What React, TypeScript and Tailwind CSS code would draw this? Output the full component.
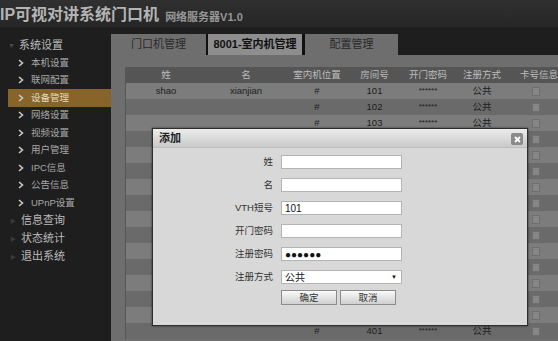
import React from "react";

const font = { fontFamily: '"Liberation Sans", "Noto Sans CJK SC", sans-serif' };

const subItems = ["本机设置", "联网配置", "设备管理", "网络设置", "视频设置", "用户管理", "IPC信息", "公告信息", "UPnP设置"];
const topItems = ["信息查询", "状态统计", "退出系统"];

type Row = { first: string; last: string; pos: string; room: string; pwd: string; mode: string };

const blank: Row = { first: "", last: "", pos: "", room: "", pwd: "", mode: "" };

// rows 4-15 sit behind the dialog
const rows: Row[] = [
  { first: "shao", last: "xianjian", pos: "#", room: "101", pwd: "******", mode: "公共" },
  { first: "", last: "", pos: "#", room: "102", pwd: "******", mode: "公共" },
  { first: "", last: "", pos: "#", room: "103", pwd: "******", mode: "公共" },
  ...Array.from({ length: 12 }, () => blank),
  { first: "", last: "", pos: "#", room: "401", pwd: "******", mode: "公共" },
];

const cols = "grid grid-cols-[80px_80px_62px_53px_54px_54px_60px]";

function Chevron() {
  return (
    <svg width="6" height="8" viewBox="0 0 6 8" className="shrink-0">
      <polyline points="1,1 4.5,4 1,7" fill="none" stroke="#c8c8c8" strokeWidth="1.6" />
    </svg>
  );
}

function Sidebar() {
  return (
    <div className="w-[111px] shrink-0 bg-[#1e1e1e] pt-[9px]">
      <div className="flex h-[18px] items-center pl-[8px]">
        <span className="mr-[4px] text-[7px] leading-none text-[#4a4a4a]">▼</span>
        <span className="text-[11px] text-[#bababa]">系统设置</span>
      </div>
      {subItems.map((s) => (
        <div
          key={s}
          className={
            "ml-[8px] flex h-[17.5px] items-center pl-[10px] " + (s === "设备管理" ? "bg-[#87652a]" : "")
          }
        >
          <Chevron />
          <span className={"ml-[7px] text-[9.5px] " + (s === "设备管理" ? "text-[#e4d8bc]" : "text-[#a8a8a8]")}>{s}</span>
        </div>
      ))}
      {topItems.map((s) => (
        <div key={s} className="flex h-[18px] items-center pl-[10px]">
          <span className="mr-[5px] text-[6px] leading-none text-[#3a3a3a]">▶</span>
          <span className="text-[11px] text-[#bababa]">{s}</span>
        </div>
      ))}
    </div>
  );
}

function Tabs() {
  return (
    <div className="flex h-[22px] bg-[#1e1e1e] pt-[1px]">
      <div className="flex w-[95px] items-center justify-center bg-[#6e6e6e] text-[11px] text-[#2a2a2a]">门口机管理</div>
      <div className="w-[2px] bg-[#111]" />
      <div className="flex w-[94px] items-center justify-center bg-[#8e8e8e] text-[11px] font-bold text-[#111]">8001-室内机管理</div>
      <div className="w-[3px] bg-[#111]" />
      <div className="flex w-[93px] items-center justify-center bg-[#6e6e6e] text-[11px] text-[#2a2a2a]">配置管理</div>
    </div>
  );
}

function Table() {
  return (
    <div className="border-l border-[#565656]">
      <div className={cols + " h-[16px] items-center bg-[#555] text-center text-[9.5px] text-[#bdbdbd]"}>
        <span>姓</span>
        <span>名</span>
        <span>室内机位置</span>
        <span>房间号</span>
        <span>开门密码</span>
        <span>注册方式</span>
        <span>卡号信息</span>
      </div>
      {rows.map((r, i) => (
        <div
          key={i}
          className={cols + " h-[16px] items-center text-center text-[9.5px] text-[#1c1c1c] " + (i % 2 === 0 ? "bg-[#7c7c7c]" : "bg-[#6a6a6a]")}
        >
          <span>{r.first}</span>
          <span>{r.last}</span>
          <span>{r.pos}</span>
          <span>{r.room}</span>
          <span className="text-[8px]">{r.pwd}</span>
          <span>{r.mode}</span>
          <span className="flex justify-center pr-[6px]">
            <span className="h-[9px] w-[8px] border border-[#6f6f6f] bg-[#868686]" />
          </span>
        </div>
      ))}
    </div>
  );
}

function Field({ label, children }: { label: string; children: React.ReactNode }) {
  return (
    <div className="flex h-[14px] items-center">
      <div className="w-[121px] pr-[1px] text-right text-[9.5px] text-[#333]">{label}</div>
      <div className="ml-[7px] h-[14px] w-[121px]">{children}</div>
    </div>
  );
}

function Input({ value }: { value?: string }) {
  return (
    <div className="flex h-full w-full items-center border border-[#b4b4b4] bg-white pl-[3px] text-[10px] text-[#111]">
      {value}
    </div>
  );
}

function Dialog() {
  return (
    <div className="absolute left-[152px] top-[128px] h-[198px] w-[376px] border border-[#2e2e2e] bg-[#d8d8d8] shadow-[0_0_2px_rgba(0,0,0,0.6)]">
      <div className="relative flex h-[19px] items-center border-b border-[#bdbdbd] bg-gradient-to-b from-[#ececec] to-[#c9c9c9] pl-[6px] text-[11px] font-semibold text-[#222]">
        添加
        <div className="absolute right-[4px] top-[4px] flex h-[12px] w-[12px] items-center justify-center rounded-[2px] bg-[#8a8a8a]">
          <svg width="7" height="7" viewBox="0 0 7 7">
            <path d="M1 1 L6 6 M6 1 L1 6" stroke="#fff" strokeWidth="1.8" />
          </svg>
        </div>
      </div>
      <div className="flex flex-col gap-[9px] pt-[7px]">
        <Field label="姓">
          <Input />
        </Field>
        <Field label="名">
          <Input />
        </Field>
        <Field label="VTH短号">
          <Input value="101" />
        </Field>
        <Field label="开门密码">
          <Input />
        </Field>
        <Field label="注册密码">
          <Input value="●●●●●●" />
        </Field>
        <Field label="注册方式">
          <div className="flex h-full w-full items-center justify-between border border-[#b4b4b4] bg-white pl-[3px] pr-[4px] text-[10px] text-[#111]">
            <span>公共</span>
            <span className="text-[6px]">▼</span>
          </div>
        </Field>
      </div>
      <div className="ml-[128px] mt-[6px] flex gap-[3px]">
        <button className="h-[15px] w-[56px] border border-[#8c8c8c] bg-gradient-to-b from-[#fafafa] to-[#cfcfcf] text-[9.5px] text-[#333]">确定</button>
        <button className="h-[15px] w-[56px] border border-[#8c8c8c] bg-gradient-to-b from-[#fafafa] to-[#cfcfcf] text-[9.5px] text-[#333]">取消</button>
      </div>
    </div>
  );
}

export default function App() {
  return (
    <div className="relative h-[341px] w-[558px] overflow-hidden bg-[#1e1e1e]" style={font}>
      <div className="flex h-[27px] items-end bg-gradient-to-b from-[#303030] to-[#262626] pb-[4px]">
        <span className="text-[16px] font-bold leading-none text-[#b4b4b4]">IP可视对讲系统门口机</span>
        <span className="ml-[6px] text-[11px] font-bold leading-none text-[#979797]">网络服务器V1.0</span>
      </div>
      <div className="flex h-[314px]">
        <Sidebar />
        <div className="flex flex-1 flex-col pt-[6px]">
          <Tabs />
          <div className="flex-1 bg-[#6e6e6e] pl-[14px] pt-[12px]">
            <Table />
          </div>
        </div>
      </div>
      <Dialog />
    </div>
  );
}
